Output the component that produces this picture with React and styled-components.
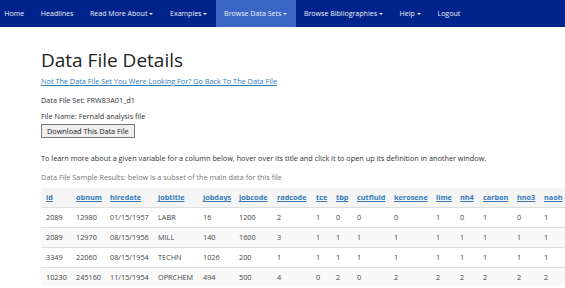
import React from "react";
import styled, { createGlobalStyle } from "styled-components";

const Global = createGlobalStyle`
  html, body { margin: 0; padding: 0; overflow: hidden; background: #fff; }
  body { font-family: "Open Sans", "Noto Sans", sans-serif; color: #333; font-size: 7.3px; line-height: 11px; }
  * { box-sizing: border-box; }
`;

const NavBar = styled.nav`
  height: 27px;
  background: #00238c;
  display: flex;
  align-items: stretch;
`;

const NavList = styled.ul`
  list-style: none;
  margin: 0 0 0 -4px;
  padding: 0;
  display: flex;
  align-items: stretch;
`;

const NavItem = styled.li`
  display: flex;
  align-items: center;
  padding: 0 8.3px;
  color: #eef0f8;
  font-size: 7.05px;
  white-space: nowrap;
  background: ${(p) => (p.$active ? "#3a66c6" : "transparent")};
`;

const Caret = styled.span`
  display: inline-block;
  width: 0;
  height: 0;
  margin-left: 2px;
  border-top: 2.5px solid currentColor;
  border-left: 2.5px solid transparent;
  border-right: 2.5px solid transparent;
`;

const Main = styled.main`
  padding-left: 41px;
`;

const Title = styled.h1`
  margin: 23px 0 0;
  font-size: 19px;
  line-height: 1.1;
  font-weight: 400;
  color: #222;
`;

const Para = styled.p`
  margin: ${(p) => p.$mt || 0}px 0 0;
  color: ${(p) => (p.$muted ? "#777" : "#333")};
  white-space: nowrap;
`;

const Link = styled.a`
  color: #337ab7;
  text-decoration: underline;
`;

const Button = styled.button`
  margin-top: 2.5px;
  font-family: "Open Sans", "Noto Sans", sans-serif;
  font-size: 7.3px;
  line-height: 10px;
  padding: 1px 5px;
  height: 14px;
  border: 1px solid #767676;
  background: #efefef;
  color: #222;
  border-radius: 0;
  display: block;
`;

const TableWrap = styled.div`
  margin-top: 5.4px;
  overflow: hidden;
`;

const Table = styled.table`
  border-collapse: collapse;
  table-layout: fixed;
`;

const HeadCell = styled.th`
  text-align: left;
  padding: 4px 5px 4px;
  line-height: 11px;
  font-weight: 700;
  background: #f5f5f5;
  border-bottom: 1px solid #ddd;
  white-space: nowrap;
  overflow: hidden;
`;

const HeadLink = styled.a`
  color: #337ab7;
  text-decoration: underline;
`;

const Row = styled.tr`
  background: ${(p) => (p.$striped ? "#f9f9f9" : "#fff")};
`;

const Cell = styled.td`
  padding: 4px 5px 3.75px;
  line-height: 11px;
  color: #444;
  border-top: 1px solid #ddd;
  white-space: nowrap;
  overflow: hidden;
`;

const columns = [
  ["id", 30], ["obnum", 34], ["hiredate", 48], ["jobtitle", 45], ["jobdays", 36],
  ["jobcode", 38], ["radcode", 39], ["tce", 20], ["tbp", 21], ["cutfluid", 37],
  ["kerosene", 42], ["lime", 24], ["nh4", 23], ["carbon", 34], ["hno3", 27],
  ["naoh", 40],
];

const rows = [
  ["2089", "12980", "01/15/1957", "LABR", "16", "1200", "2", "1", "0", "0", "0", "1", "0", "1", "0", "1"],
  ["2089", "12970", "08/15/1956", "MILL", "140", "1600", "3", "1", "1", "1", "1", "1", "1", "1", "1", "1"],
  ["3349", "22060", "08/15/1954", "TECHN", "1026", "200", "1", "1", "1", "1", "1", "1", "1", "1", "1", "1"],
  ["10230", "245160", "11/15/1954", "OPRCHEM", "494", "500", "4", "0", "2", "0", "2", "2", "2", "2", "2", "2"],
];

const navItems = [
  ["Home"], ["Headlines"], ["Read More About", true], ["Examples", true],
  ["Browse Data Sets", true, true], ["Browse Bibliographies", true], ["Help", true], ["Logout"],
];

export default function App() {
  const total = columns.reduce((s, c) => s + c[1], 0);
  return (
    <>
      <Global />
      <NavBar>
        <NavList>
          {navItems.map(([label, caret, active]) => (
            <NavItem key={label} $active={active}>
              {label}
              {caret && <Caret />}
            </NavItem>
          ))}
        </NavList>
      </NavBar>
      <Main>
        <Title>Data File Details</Title>
        <Para $mt={5}>
          <Link href="#">Not The Data File Set You Were Looking For? Go Back To The Data File</Link>
        </Para>
        <Para $mt={8.5}>Data File Set: FRW83A01_d1</Para>
        <Para $mt={4.5}>File Name: Fernald analysis file</Para>
        <Button>Download This Data File</Button>
        <Para $mt={15}>
          To learn more about a given variable for a column below, hover over its title and click it to open up its definition in another window.
        </Para>
        <Para $mt={7.5} $muted>Data File Sample Results: below is a subset of the main data for this file</Para>
        <TableWrap>
          <Table style={{ width: total }}>
            <colgroup>
              {columns.map(([name, w]) => (
                <col key={name} style={{ width: w }} />
              ))}
            </colgroup>
            <tbody>
              <tr>
                {columns.map(([name]) => (
                  <HeadCell key={name}>
                    <HeadLink href="#">{name}</HeadLink>
                  </HeadCell>
                ))}
              </tr>
              {rows.map((r, i) => (
                <Row key={i} $striped={i % 2 === 1}>
                  {r.map((v, j) => (
                    <Cell key={j}>{v}</Cell>
                  ))}
                </Row>
              ))}
            </tbody>
          </Table>
        </TableWrap>
      </Main>
    </>
  );
}
